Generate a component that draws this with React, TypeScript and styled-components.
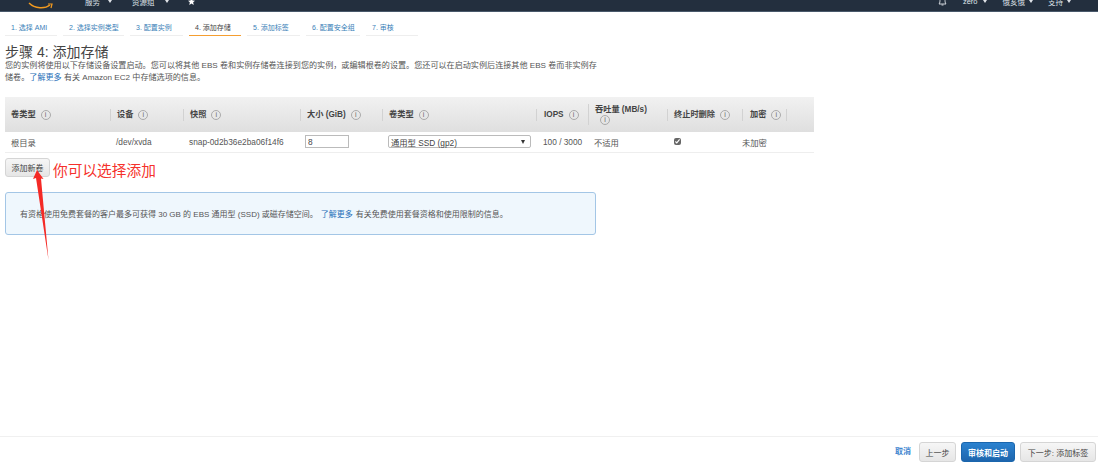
import React from "react";
import styled, { createGlobalStyle } from "styled-components";

const Global = createGlobalStyle`
  html, body { margin: 0; padding: 0; background: #fff; }
  body { font-family: "Liberation Sans", "Noto Sans CJK SC", sans-serif; color: #555; font-size: 8px; }
  * { box-sizing: border-box; }
`;

const Page = styled.div`
  position: relative;
  width: 1098px;
  height: 465px;
  display: flex;
  flex-direction: column;
  overflow: hidden;
`;

const TopBar = styled.header`
  flex: 0 0 12px;
  background: #232f3e;
  border-bottom: 1px solid #49596b;
  overflow: hidden;
`;

const TopInner = styled.div`
  height: 18px;
  margin-top: -8px;
  padding-right: 27px;
  display: flex;
  align-items: center;
  color: #dfe3e8;
  font-size: 7.5px;
`;

const Logo = styled.svg`
  width: 26px;
  height: 18px;
  margin-left: 28px;
  flex: none;
`;

const NavItem = styled.span<{ $left?: number; $gap?: number }>`
  margin-left: ${(p) => p.$left ?? 0}px;
  display: inline-flex;
  align-items: center;
  gap: ${(p) => p.$gap ?? 8}px;
`;

const Caret = styled.i`
  width: 0;
  height: 0;
  border-left: 2px solid transparent;
  border-right: 2px solid transparent;
  border-top: 3px solid #dfe3e8;
`;

const Spacer = styled.div`
  flex: 1;
`;

const Tabs = styled.nav`
  display: flex;
  padding: 9px 0 0 5px;
  gap: 6px;
`;

const Tab = styled.div<{ $w: number; $active?: boolean }>`
  width: ${(p) => p.$w}px;
  height: 15px;
  padding-left: 6px;
  font-size: 7px;
  line-height: 13px;
  white-space: nowrap;
  color: ${(p) => (p.$active ? "#444" : "#3b7fb8")};
  border-bottom: 1px solid ${(p) => (p.$active ? "#f59e30" : "#eee")};
`;

const Content = styled.main`
  flex: 1;
  padding: 8px 0 0 5px;
  display: flex;
  flex-direction: column;
  align-items: flex-start;
`;

const Title = styled.h1`
  margin: 0;
  font-size: 14px;
  font-weight: 400;
  line-height: 16px;
  color: #444;
`;

const Desc = styled.p`
  margin: 0 0 13px;
  width: 596px;
  font-size: 8.1px;
  line-height: 12px;
  color: #555;
`;

const Link = styled.a`
  color: #1f6fb8;
`;

const Table = styled.table`
  width: 809px;
  border-collapse: collapse;
  table-layout: fixed;
`;

const HeadRow = styled.tr`
  height: 35px;
  background: linear-gradient(#f1f1f1, #dfdfdf);
`;

const Th = styled.th<{ $w?: number }>`
  ${(p) => (p.$w ? `width: ${p.$w}px;` : "")}
  padding: 0 0 0 6px;
  font-size: 8.2px;
  line-height: 11px;
  font-weight: 700;
  color: #444;
  text-align: left;
  vertical-align: middle;
`;

const HeadCell = styled.div`
  display: flex;
  align-items: center;
  gap: 5px;
  min-height: 12px;
`;

const Info = styled.span`
  width: 10px;
  height: 10px;
  border: 1px solid #aaa;
  border-radius: 50%;
  font-size: 7px;
  line-height: 8px;
  font-weight: 400;
  color: #666;
  text-align: center;
  flex: none;
`;

const Divided = styled.span<{ $wrap?: boolean; $pad?: number; $endLine?: boolean }>`
  border-left: 1px solid #d2d2d2;
  ${(p) => (p.$endLine ? "border-right: 1px solid #d2d2d2;" : "")}
  margin-left: -6px;
  padding-left: ${(p) => p.$pad ?? 6}px;
  display: flex;
  align-items: center;
  flex-wrap: wrap;
  column-gap: 5px;
  min-height: 12px;
  ${(p) => (p.$wrap ? "width: 66px;" : "")}
`;

const WrappedInfo = styled(Info)`
  margin-left: 5px;
`;

const Td = styled.td<{ $pad?: number }>`
  height: 20px;
  padding: 0 0 0 ${(p) => p.$pad ?? 6}px;
  font-size: 8.3px;
  color: #555;
  border-bottom: 1px solid #eee;
`;

const SizeInput = styled.input`
  width: 44px;
  height: 13px;
  margin-left: -1px;
  padding: 0 2px;
  border: 1px solid #bbb;
  font: 8.3px "Liberation Sans", sans-serif;
  color: #444;
  display: block;
`;

const Select = styled.div`
  width: 143px;
  height: 13px;
  padding: 0 2px;
  border: 1px solid #bbb;
  border-radius: 2px;
  display: flex;
  align-items: center;
  justify-content: space-between;
  font-size: 8.3px;
  color: #444;
`;

const DarkCaret = styled.i`
  width: 0;
  height: 0;
  margin-right: 3px;
  border-left: 2px solid transparent;
  border-right: 2px solid transparent;
  border-top: 4px solid #333;
`;

const Check = styled.input`
  width: 7px;
  height: 7px;
  margin: 0 0 0 1px;
  display: block;
  accent-color: #666;
`;

const AddRow = styled.div`
  margin-top: 5px;
  display: flex;
  align-items: flex-start;
  gap: 3px;
`;

const Button = styled.button<{ $w: number; $h?: number; $primary?: boolean }>`
  width: ${(p) => p.$w}px;
  height: ${(p) => p.$h ?? 20}px;
  padding: 0;
  border-radius: 3px;
  border: 1px solid ${(p) => (p.$primary ? "#1a66ad" : "#d5d5d5")};
  background: ${(p) => (p.$primary ? "linear-gradient(#2b82d0, #1d65ad)" : "linear-gradient(#f6f6f6, #e6e6e6)")};
  color: ${(p) => (p.$primary ? "#fff" : "#444")};
  font: ${(p) => (p.$primary ? 700 : 400)} 8px "Liberation Sans", "Noto Sans CJK SC", sans-serif;
`;

const Note = styled.span`
  margin-top: 4px;
  font-size: 14.7px;
  line-height: 18px;
  color: #f5312c;
`;

const InfoBox = styled.div`
  margin-top: 12px;
  width: 591px;
  height: 43px;
  padding-left: 14px;
  display: flex;
  align-items: center;
  gap: 3px;
  background: #eff7fd;
  border: 1px solid #a3c6e6;
  border-radius: 3px;
  font-size: 8px;
  color: #555;
`;

const Footer = styled.footer`
  flex: 0 0 29px;
  border-top: 1px solid #f0f0f0;
  padding: 5px 2px 0 0;
  display: flex;
  justify-content: flex-end;
  align-items: flex-start;
  gap: 5px;
`;

const Cancel = styled.a`
  margin-right: 3px;
  font-size: 8px;
  font-weight: 700;
  line-height: 20px;
  color: #3f86cf;
`;

const Arrow = styled.svg`
  position: absolute;
  left: 30px;
  top: 168px;
  width: 24px;
  height: 94px;
`;

const i = <Info>i</Info>;

export default function App() {
  return (
    <>
      <Global />
      <Page>
        <TopBar>
          <TopInner>
            <Logo viewBox="0 0 26 18">
              <path d="M1 11 C7 17 17 17 22 13" fill="none" stroke="#f29a1f" strokeWidth="1.4" />
              <path d="M20 12 L24 12 L23 16" fill="none" stroke="#f29a1f" strokeWidth="1.2" />
            </Logo>
            <NavItem $left={31}>服务<Caret /></NavItem>
            <NavItem $left={20} $gap={10}>资源组<Caret /></NavItem>
            <NavItem $left={19}>
              <svg width="7" height="7" viewBox="0 0 10 10"><path d="M5 0 L6.5 3.4 L10 3.8 L7.4 6.2 L8.1 10 L5 8 L1.9 10 L2.6 6.2 L0 3.8 L3.5 3.4 Z" fill="#fff" /></svg>
            </NavItem>
            <Spacer />
            <svg width="9" height="12" viewBox="0 0 9 12"><path d="M1 9 C2 8 2 6 2 4 C2 2 3 1 4.5 1 C6 1 7 2 7 4 C7 6 7 8 8 9 Z M3.5 10 H5.5" fill="none" stroke="#dfe3e8" strokeWidth="0.9" /></svg>
            <NavItem $left={16} $gap={5}>zero<Caret /></NavItem>
            <NavItem $left={16} $gap={4}>俄亥俄<Caret /></NavItem>
            <NavItem $left={15} $gap={4}>支持<Caret /></NavItem>
          </TopInner>
        </TopBar>
        <Tabs>
          <Tab $w={52}>1. 选择 AMI</Tab>
          <Tab $w={61}>2. 选择实例类型</Tab>
          <Tab $w={53}>3. 配置实例</Tab>
          <Tab $w={52} $active>4. 添加存储</Tab>
          <Tab $w={53}>5. 添加标签</Tab>
          <Tab $w={54}>6. 配置安全组</Tab>
          <Tab $w={52}>7. 审核</Tab>
        </Tabs>
        <Content>
          <Title>步骤 4: 添加存储</Title>
          <Desc>
            您的实例将使用以下存储设备设置启动。您可以将其他 EBS 卷和实例存储卷连接到您的实例，或编辑根卷的设置。您还可以在启动实例后连接其他 EBS 卷而非实例存储卷。<Link>了解更多</Link> 有关 Amazon EC2 中存储选项的信息。
          </Desc>
          <Table>
            <thead>
              <HeadRow>
                <Th $w={105}><HeadCell>卷类型 {i}</HeadCell></Th>
                <Th $w={73}><Divided>设备 {i}</Divided></Th>
                <Th $w={117}><Divided>快照 {i}</Divided></Th>
                <Th $w={82}><Divided>大小 (GiB) {i}</Divided></Th>
                <Th $w={154}><Divided>卷类型 {i}</Divided></Th>
                <Th $w={52}><Divided $pad={7}>IOPS {i}</Divided></Th>
                <Th $w={79}><Divided $wrap>吞吐量 (MB/s) <WrappedInfo>i</WrappedInfo></Divided></Th>
                <Th $w={75}><Divided>终止时删除 {i}</Divided></Th>
                <Th $w={45}><Divided $pad={7} $endLine>加密 {i}</Divided></Th>
                <Th />
              </HeadRow>
            </thead>
            <tbody>
              <tr>
                <Td>根目录</Td>
                <Td>/dev/xvda</Td>
                <Td>snap-0d2b36e2ba06f14f6</Td>
                <Td><SizeInput defaultValue="8" /></Td>
                <Td><Select>通用型 SSD (gp2)<DarkCaret /></Select></Td>
                <Td $pad={7}>100 / 3000</Td>
                <Td>不适用</Td>
                <Td><Check type="checkbox" defaultChecked /></Td>
                <Td $pad={0}>未加密</Td>
                <Td />
              </tr>
            </tbody>
          </Table>
          <AddRow>
            <Button $w={45} $h={19}>添加新卷</Button>
            <Note>你可以选择添加</Note>
          </AddRow>
          <InfoBox>
            有资格使用免费套餐的客户最多可获得 30 GB 的 EBS 通用型 (SSD) 或磁存储空间。<Link>了解更多</Link> 有关免费使用套餐资格和使用限制的信息。
          </InfoBox>
        </Content>
        <Footer>
          <Cancel>取消</Cancel>
          <Button $w={37}>上一步</Button>
          <Button $w={54} $primary>审核和启动</Button>
          <Button $w={76}>下一步: 添加标签</Button>
        </Footer>
        <Arrow viewBox="0 0 24 94">
          <path d="M7 2 L13.5 11 L11 10.5 L18.5 92 L6 10 L3 11 Z" fill="#f42a26" />
        </Arrow>
      </Page>
    </>
  );
}
